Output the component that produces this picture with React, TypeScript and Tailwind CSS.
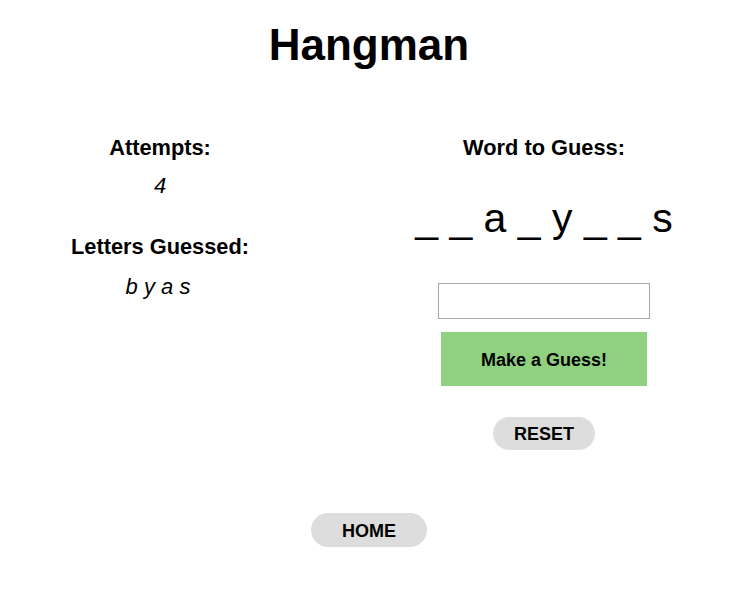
import React from "react";

export default function App() {
  const font = { fontFamily: '"Liberation Sans", Arial, sans-serif' };
  return (
    <div className="w-[738px] bg-white text-black min-h-[589px]" style={font}>
      <h1 className="pt-[20px] text-center text-[44px] leading-[50px] font-bold">Hangman</h1>
      <div className="mt-[65px] grid grid-cols-[320px_320px] gap-x-[64px]">
        <div className="flex flex-col items-center">
          <h3 className="text-[21.8px] leading-[26px] font-bold">Attempts:</h3>
          <p className="mt-[12px] text-[22px] leading-[26px] italic">4</p>
          <h3 className="mt-[35px] text-[21.8px] leading-[26px] font-bold">Letters Guessed:</h3>
          <p className="mt-[14px] pr-[4px] text-[22px] leading-[26px] italic">b y a s</p>
        </div>
        <div className="flex flex-col items-center">
          <h3 className="text-[21.8px] leading-[26px] font-bold">Word to Guess:</h3>
          <p className="mt-[34px] text-[41px] leading-[46px]">_ _ a _ y _ _ s</p>
          <input
            type="text"
            className="mt-[42px] w-[212px] h-[36px] border border-[#a9a9a9] outline-none px-2"
          />
          <button className="mt-[13px] w-[206px] h-[54px] pt-[2px] bg-[#8fd17f] text-[18px] font-bold">
            Make a Guess!
          </button>
          <button className="mt-[31px] w-[102px] h-[33px] pt-[2px] rounded-full bg-[#dddddd] text-[18px] font-bold">
            RESET
          </button>
        </div>
      </div>
      <div className="mt-[63px] flex justify-center">
        <button className="w-[116px] h-[34px] pt-[2px] rounded-full bg-[#dddddd] text-[18px] font-bold">
          HOME
        </button>
      </div>
    </div>
  );
}
